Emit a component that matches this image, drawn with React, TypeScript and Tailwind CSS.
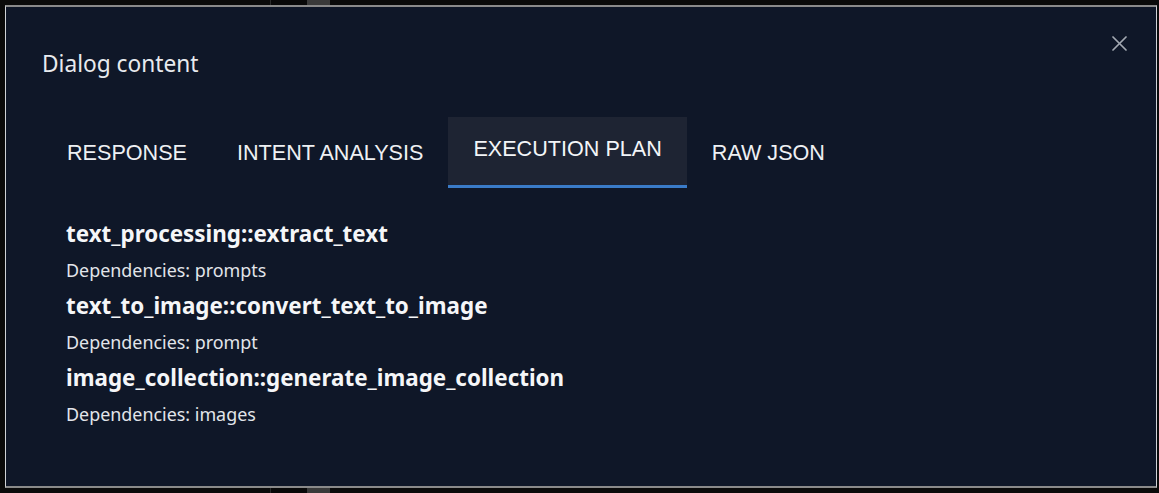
import React from "react";

const items = [
  { name: "text_processing::extract_text", deps: "prompts" },
  { name: "text_to_image::convert_text_to_image", deps: "prompt" },
  { name: "image_collection::generate_image_collection", deps: "images" },
];

const tabs = ["RESPONSE", "INTENT ANALYSIS", "EXECUTION PLAN", "RAW JSON"];

function Strip() {
  return (
    <div className="flex h-[6px] w-full">
      <div className="w-[270px] bg-[#0b0b0b]" />
      <div className="w-[1px] bg-[#2a2a2a]" />
      <div className="w-[36px] bg-[#080808]" />
      <div className="w-[23px] bg-[#3a3a3a]" />
      <div className="flex-1 bg-[#0a0a0a]" />
    </div>
  );
}

export default function App() {
  const seg = { fontFamily: '"Noto Sans", "Open Sans", sans-serif' };
  return (
    <div className="w-[1159px] h-[493px] bg-[#060606] overflow-hidden flex flex-col">
      <Strip />
      <div className="flex h-[483px]">
        <div className="w-[5px] bg-[#0a0a0a]" />
        <div className="w-[1152px] h-[483px] bg-[#0f1728] border-y-2 border-x border-y-[#8a8a8a] border-x-[#cfd2d6] flex flex-col pl-[36px] pr-[30px]">
          <div className="flex items-start justify-between h-[110px]">
            <div style={seg} className="mt-[40px] text-[22.7px] leading-[34px] text-[#e8eaee]">
              Dialog content
            </div>
            <button className="mt-[29px] mr-[-1px] w-[15px] h-[15px] text-[#a3a9b2]">
              <svg width="15" height="15" viewBox="0 0 15 15" fill="none" stroke="currentColor" strokeWidth="1.7" strokeLinecap="round">
                <path d="M1 1L14 14M14 1L1 14" />
              </svg>
            </button>
          </div>
          <div className="flex h-[71px]" style={{ fontFamily: '"Liberation Sans", Arial, sans-serif' }}>
            {tabs.map((t) => {
              const active = t === "EXECUTION PLAN";
              return (
                <div
                  key={t}
                  className={
                    active
                      ? "px-[25px] h-full flex items-center justify-center bg-[#1e2433] border-b-[3px] border-[#3a7bc8] text-[#f3f5f8] text-[21.6px] pb-[4px]"
                      : "px-[25px] h-full flex items-center justify-center text-[#eef0f3] text-[21.6px] pt-[1px]"
                  }
                >
                  {t}
                </div>
              );
            })}
          </div>
          <div className="pl-[24px] pt-[28px] flex flex-col" style={seg}>
            {items.map((it) => (
              <div key={it.name} className="flex flex-col">
                <div className="h-[36px] flex items-center text-[22.4px] font-bold text-[#f5f6f8]">{it.name}</div>
                <div className="h-[36px] flex items-center text-[17.9px] text-[#e2e5ea]">Dependencies: {it.deps}</div>
              </div>
            ))}
          </div>
        </div>
        <div className="flex-1 bg-[#0a0a0a]" />
      </div>
      <Strip />
    </div>
  );
}
